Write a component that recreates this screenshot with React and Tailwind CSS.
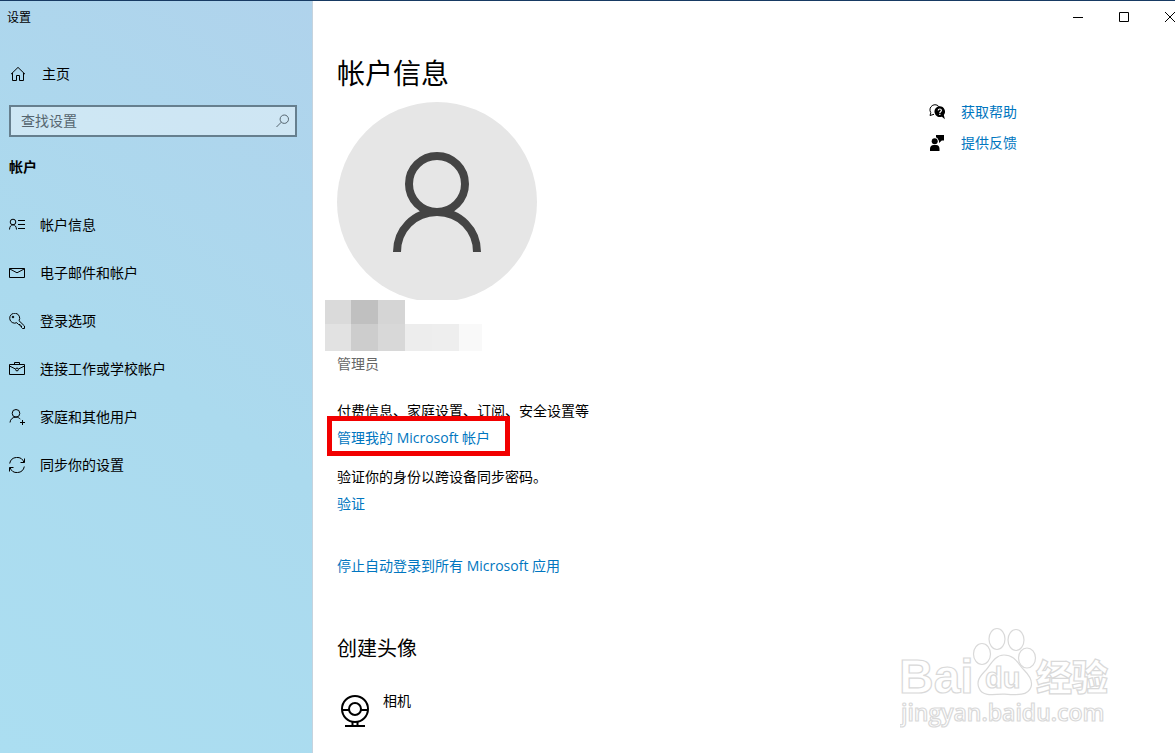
import React from "react";

const iconProps = {
  width: 16,
  height: 16,
  viewBox: "0 0 16 16",
  fill: "none",
  stroke: "currentColor",
  strokeWidth: 1,
  "aria-hidden": true,
  className: "shrink-0",
};

const HomeIcon = () => (
  <svg {...iconProps}>
    <path d="M1 8.200 8 1.400l7 6.800M2.500 7v7.500h4V9.500h3v5h4V7" />
  </svg>
);

const SearchIcon = () => (
  <svg {...iconProps}>
    <circle cx="9.300" cy="6.200" r="4.200" />
    <path d="M6.300 9.200 1.500 14" />
  </svg>
);

const AccountIcon = () => (
  <svg {...iconProps}>
    <circle cx="4" cy="5" r="2.800" />
    <path d="M.5 12.500C.6 9.600 2 7.800 4 7.800s3.400 1.800 3.500 4.700M9 3.500h7M9 7.500h7M9 11.500h7" />
  </svg>
);

const MailIcon = () => (
  <svg {...iconProps}>
    <path d="M.5 3.500h15v9H.5zM.5 3.800 8 7.800l7.500-4" />
  </svg>
);

const KeyIcon = () => (
  <svg {...iconProps}>
    <path d="M10 7.700A5 5 0 1 0 7.800 9.700l1.700 1.800h1.500v1.500h1.500v1.500l1 1h2v-2.500z" />
    <circle cx="4" cy="4" r=".8" fill="currentColor" />
  </svg>
);

const BriefcaseIcon = () => (
  <svg {...iconProps}>
    <path d="M.5 3.500h15v10H.5zM5.500 3.500v-2h5v2M.5 5l6 3M15.500 5l-6 3" />
    <circle cx="8" cy="8.500" r="1.400" />
  </svg>
);

const FamilyIcon = () => (
  <svg {...iconProps}>
    <circle cx="7" cy="4.300" r="3.800" />
    <path d="M1 13.500C1.300 10.300 3.600 8.100 7 8.100c1.800 0 3.300.8 4.300 2.100M13.500 11v5M11 13.500h5" />
  </svg>
);

const SyncIcon = () => (
  <svg {...iconProps}>
    <path d="M.7 6.500A7.400 7.400 0 0 1 15 5.500M15.300 9.500A7.400 7.400 0 0 1 1 10.500M15.500 1.500v4h-4M.5 14.500v-4h4" />
  </svg>
);

const HelpIcon = () => (
  <svg {...iconProps}>
    <path d="M5 10.300 1 11.500 1.800 8.700A4.900 4.900 0 1 1 10.300 3" />
    <path
      d="M10.700 2.300a5.400 5.400 0 1 0 2.200 10.400l3 2.600-1.100-4.200a5.400 5.400 0 0 0-4.100-8.800z"
      fill="currentColor"
      stroke="none"
    />
    <path d="M9.200 6.500c0-2 3.200-2 3.200 0 0 1.200-1.600 1.200-1.600 2.400M10.800 9.800v1.200" stroke="white" strokeWidth="1.200" />
  </svg>
);

const FeedbackIcon = () => (
  <svg {...iconProps} fill="currentColor" stroke="none">
    <circle cx="5.700" cy="6.300" r="3" />
    <path d="M1 16v-2.200C1 11.500 2.500 10 4.600 10h2.600c2.100 0 3.300 1.500 3.300 3.800V16zM7 0h8v5.500h-2.200L10 8V5.500h-.4A4.300 4.300 0 0 0 7 2.300z" />
  </svg>
);

const navItems = [
  { label: "帐户信息", Icon: AccountIcon },
  { label: "电子邮件和帐户", Icon: MailIcon },
  { label: "登录选项", Icon: KeyIcon },
  { label: "连接工作或学校帐户", Icon: BriefcaseIcon },
  { label: "家庭和其他用户", Icon: FamilyIcon },
  { label: "同步你的设置", Icon: SyncIcon },
];

function Sidebar() {
  return (
    <aside className="w-[313px] shrink-0 border-r border-[#c5d3de] bg-linear-[35deg] from-[#abdef1] via-[#abdaee] to-[#b0d3ec]">
      <div className="flex h-8 items-center px-[7px] pt-px text-xs">设置</div>
      <a href="#home" className="mt-[23px] flex h-9 items-center gap-4 px-[10px]">
        <HomeIcon />
        主页
      </a>
      <label className="mr-[15px] mt-[13px] ml-[9px] flex h-8 items-center border-2 border-[#667f8e] bg-white/40 pr-2 pl-[10px] text-[#55656f]">
        <input
          type="text"
          aria-label="查找设置"
          placeholder="查找设置"
          className="min-w-0 flex-1 bg-transparent leading-7 outline-none placeholder:text-[#55656f]"
        />
        <span className="-mr-1">
          <SearchIcon />
        </span>
      </label>
      <h2 className="mt-5 px-[9px] font-bold leading-5">帐户</h2>
      <nav className="mt-6">
        {navItems.map(({ label, Icon }) => (
          <a key={label} href="#section" className="flex h-12 items-center gap-[15px] px-[9px]">
            <Icon />
            {label}
          </a>
        ))}
      </nav>
    </aside>
  );
}

function WindowControls() {
  return (
    <div className="-mr-[18px] flex h-8 justify-end">
      <button type="button" aria-label="最小化" className="flex w-[46px] items-center justify-center">
        <svg width="10" height="10" viewBox="0 0 10 10" stroke="black" fill="none">
          <path d="M0 5.500h10" />
        </svg>
      </button>
      <button type="button" aria-label="最大化" className="flex w-[46px] items-center justify-center">
        <svg width="10" height="10" viewBox="0 0 10 10" stroke="black" fill="none">
          <path d="M.5.5h9v9h-9z" />
        </svg>
      </button>
      <button type="button" aria-label="关闭" className="flex w-[46px] items-center justify-center">
        <svg width="10" height="10" viewBox="0 0 10 10" stroke="black" fill="none">
          <path d="m0 0 10 10M10 0 0 10" />
        </svg>
      </button>
    </div>
  );
}

function Avatar() {
  return (
    <svg width="200" height="198" viewBox="0 0 200 198" fill="none" role="img" aria-label="头像" className="block">
      <circle cx="100" cy="100" r="100" fill="#e6e6e6" />
      <circle cx="100" cy="82" r="28" stroke="#444" strokeWidth="8" />
      <path d="M60 150c0-22 17-40 40-40s40 18 40 40" stroke="#444" strokeWidth="8" />
    </svg>
  );
}

function HiddenName() {
  return (
    <div className="-ml-3 grid w-[157px] grid-cols-[26px_27px_27px_27px_27px_23px] grid-rows-[24px_27px]">
      <span className="bg-[#dadada]" />
      <span className="bg-[#c0c0c0]" />
      <span className="bg-[#d5d5d5]" />
      <span className="col-span-3" />
      <span className="bg-[#e2e2e2]" />
      <span className="bg-[#cdcdcd]" />
      <span className="bg-[#d8d8d8]" />
      <span className="bg-[#ededed]" />
      <span className="bg-[#eeeeee]" />
      <span className="bg-[#f9f9f9]" />
    </div>
  );
}

function Watermark() {
  return (
    <svg
      width="220"
      height="110"
      viewBox="0 0 220 110"
      fill="white"
      stroke="#d9d9d9"
      strokeWidth="1.200"
      className="pointer-events-none absolute right-[55px] bottom-[18px]"
    >
      <g className="font-['Liberation_Sans','Noto_Sans_CJK_SC',sans-serif] font-bold">
        <text x="-1" y="68" fontSize="48">Bai</text>
        <ellipse cx="82" cy="29" rx="8.500" ry="10.500" />
        <ellipse cx="97" cy="14" rx="8" ry="10.500" />
        <ellipse cx="116" cy="15" rx="8" ry="10.500" />
        <ellipse cx="127" cy="33" rx="8.500" ry="10" />
        <path d="M104 30c11 0 14 9 20 15 6 6 9 11 7 17-3 9-14 8-27 7-13 1-22 2-25-6-3-7 1-12 7-18 5-6 9-15 18-15z" />
        <text x="85" y="63" fontSize="29">du</text>
        <text x="136" y="66" fontSize="36" className="font-black">经验</text>
      </g>
      <text x="1" y="96" fontSize="23" className="font-['Open_Sans',sans-serif] font-semibold">
        jingyan.baidu.com
      </text>
    </svg>
  );
}

export default function App() {
  return (
    <div className="relative flex min-h-screen overflow-hidden border-t border-[#173a63] bg-white font-['Open_Sans','Noto_Sans_CJK_SC',sans-serif] text-sm text-black">
      <Sidebar />
      <main className="min-w-0 flex-1">
        <WindowControls />
        <div className="flex pl-6">
          <div className="max-w-[592px] flex-1">
            <h1 className="mt-5 text-[28px] leading-10">帐户信息</h1>
            <div className="mt-[9px]">
              <Avatar />
            </div>
            <HiddenName />
            <p className="mt-[3px] leading-5 text-[#666]">管理员</p>
            <p className="mt-[27px] leading-5">付费信息、家庭设置、订阅、安全设置等</p>
            <div className="relative mt-[7px] flex">
              <a href="#manage" className="leading-5 text-[#0076c0]">管理我的 Microsoft 帐户</a>
              <span className="pointer-events-none absolute -top-3 -left-[10px] h-10 w-[183px] border-5 border-[#f20000]" />
            </div>
            <p className="mt-[19px] leading-5">验证你的身份以跨设备同步密码。</p>
            <a href="#verify" className="mt-[7px] block leading-5 text-[#0076c0]">验证</a>
            <a href="#stop" className="mt-[42px] block leading-5 text-[#0076c0]">停止自动登录到所有 Microsoft 应用</a>
            <h2 className="mt-[57px] text-xl leading-8">创建头像</h2>
            <button type="button" className="mt-[26px] flex items-start gap-3 pl-1 text-left">
              <svg width="30" height="34" viewBox="0 0 30 34" fill="none" stroke="black" strokeWidth="2" className="mt-1">
                <circle cx="14" cy="14" r="13" />
                <circle cx="14" cy="14" r="6" />
                <path d="M1 15h7M20 15h7M11.500 27v4M16.500 27v4M4 31h20" />
              </svg>
              <span className="leading-5">相机</span>
            </button>
          </div>
          <div className="mt-[69px] flex flex-col gap-[11px]">
            <a href="#help" className="flex items-center gap-4 leading-5">
              <HelpIcon />
              <span className="text-[#0076c0]">获取帮助</span>
            </a>
            <a href="#feedback" className="flex items-center gap-4 leading-5">
              <FeedbackIcon />
              <span className="text-[#0076c0]">提供反馈</span>
            </a>
          </div>
        </div>
      </main>
      <Watermark />
    </div>
  );
}
